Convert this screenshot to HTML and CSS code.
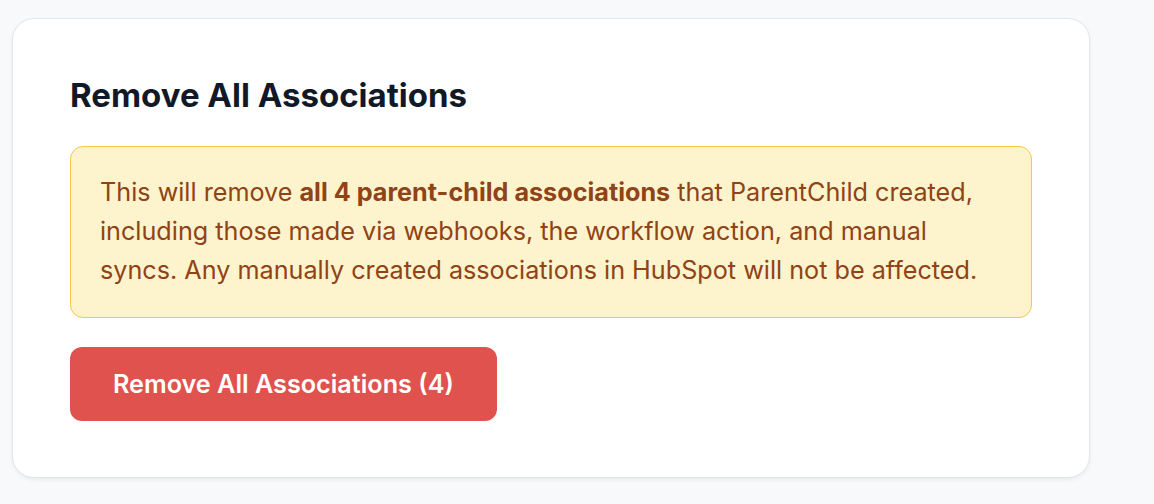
FILE: index.html
```html
<!DOCTYPE html>
<html lang="en">
<head>
<meta charset="utf-8">
<title>Remove All Associations</title>
<link rel="stylesheet" href="styles.css">
</head>
<body>
<main class="page">
  <section class="card">
    <h2 class="title">Remove All Associations</h2>
    <div class="warning">
      This will remove <strong>all 4 parent-child associations</strong> that ParentChild created, including those made via webhooks, the workflow action, and manual syncs. Any manually created associations in HubSpot will not be affected.
    </div>
    <button class="danger-btn" type="button">Remove All Associations (4)</button>
  </section>
</main>
</body>
</html>
```

FILE: styles.css
```css
* { box-sizing: border-box; }
html, body {
  margin: 0;
  padding: 0;
  background: #f8f9fb;
  font-family: Inter, "Noto Sans", sans-serif;
}
.page {
  padding: 18px 64px 26px 12px;
}
.card {
  width: 1078px;
  background: #ffffff;
  border: 1px solid #e3e6ec;
  border-radius: 22px;
  box-shadow: 0 2px 4px rgba(15, 23, 42, 0.06);
  padding: 56px 57px 56px 57px;
  display: flex;
  flex-direction: column;
  align-items: flex-start;
}
.title {
  margin: 0 0 31px 0;
  font-size: 33px;
  line-height: 40px;
  font-weight: 700;
  color: #111827;
}
.warning {
  align-self: stretch;
  background: #fdf3cc;
  border: 1px solid #f2c94c;
  border-radius: 13px;
  padding: 26px 29px 27px 29px;
  color: #8f4317;
  font-size: 25.2px;
  line-height: 39px;
  margin-bottom: 29px;
}
.warning strong {
  font-weight: 700;
}
.danger-btn {
  background: #df524e;
  color: #ffffff;
  border: none;
  border-radius: 12px;
  height: 74px;
  padding: 0 43px;
  font-family: Inter, "Noto Sans", sans-serif;
  font-size: 25.2px;
  font-weight: 600;
  cursor: pointer;
}
```
